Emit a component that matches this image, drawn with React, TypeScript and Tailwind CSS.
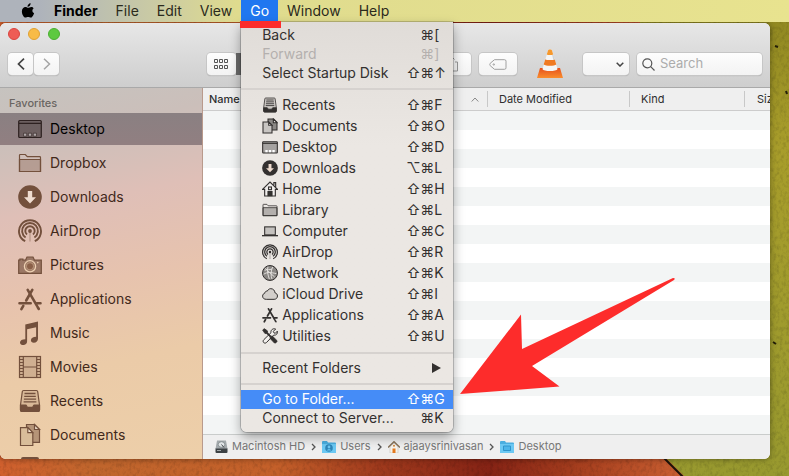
import React from "react";

type IconProps = { className?: string };

function Svg({ className, children }: IconProps & { children: React.ReactNode }) {
  return (
    <svg viewBox="0 0 24 24" className={className} fill="none" stroke="currentColor" strokeWidth="1.2" aria-hidden="true">
      {children}
    </svg>
  );
}

const DesktopIcon = ({ className }: IconProps) => (
  <Svg className={className}>
    <rect x="0.7" y="3.5" width="22.6" height="17" rx="1" fill="currentColor" fillOpacity="0.35" />
    <path d="M1 6.3h22" />
    <path d="M5.5 16.2h3.2v3H5.5zM10.4 16.2h3.2v3h-3.2zM15.3 16.2h3.2v3h-3.2z" fill="#fff" fillOpacity="0.45" strokeWidth="0.6" />
  </Svg>
);
const MenuDesktopIcon = ({ className }: IconProps) => (
  <Svg className={className}>
    <rect x="1" y="4" width="22" height="17" rx="1" fill="#a5a2a0" strokeWidth="1.6" />
    <path d="M1 6.500h22" strokeWidth="1.600" />
    <path d="M5 16.500h3.500V20H5zM10.300 16.500h3.500V20h-3.500zM15.600 16.500h3.500V20h-3.500z" fill="#fff" stroke="none" />
  </Svg>
);
const FolderIcon = ({ className }: IconProps) => (
  <Svg className={className}>
    <path d="M1.5 20.5V4.2c0-.5.3-.7.8-.7h5l2 2.2h12.400c.5 0 .8.300.8.800v14z" />
    <path d="M1.500 8.500h21v12h-21z" fill="currentColor" fillOpacity="0.300" />
  </Svg>
);
const DownloadsIcon = ({ className }: IconProps) => (
  <Svg className={className}>
    <circle cx="12" cy="12" r="11.800" fill="currentColor" stroke="none" />
    <path d="M9.800 6h4.400v6.200H18L12 18.500l-6-6.300h3.800z" fill="#efdccf" stroke="none" />
  </Svg>
);
const AirDropIcon = ({ className }: IconProps) => (
  <Svg className={className}>
    <g strokeWidth="1.900">
      <path d="M7.200 22.200a11 11 0 1 1 9.600 0" />
      <path d="M7.600 18.500a7.900 7.900 0 1 1 8.800 0" />
      <path d="M9 15.600a4.700 4.700 0 1 1 6 0" />
    </g>
    <circle cx="12" cy="12" r="1.900" fill="currentColor" stroke="none" />
    <path d="M12 13v9.500" strokeWidth="1.200" strokeOpacity="0.400" />
  </Svg>
);
const PicturesIcon = ({ className }: IconProps) => (
  <Svg className={className}>
    <path d="M.700 7.200h1.200V6h3v1.200h2.600L9 4h6l1.500 3.200h6.800v13.100H.700z" fill="currentColor" fillOpacity="0.650" />
    <circle cx="12" cy="13.300" r="5.600" fill="#9a7660" stroke="#edd0b2" strokeWidth="1.300" />
    <circle cx="12" cy="13.300" r="3.600" fill="#8a6048" stroke="#c9a78d" strokeWidth="0.700" />
    <circle cx="19.800" cy="9.600" r="0.800" fill="#edd0b2" stroke="none" />
  </Svg>
);
const ApplicationsIcon = ({ className }: IconProps) => (
  <Svg className={className}>
    <g strokeWidth="2.600" strokeLinecap="round">
      <path d="M14.300 2.800 8.200 13.500M5.300 18.800l-1.900 3.300" />
      <path d="m9.700 2.800 9.300 16M19.600 20l1.200 2" />
      <path d="M1.500 16.200h11.200M18.800 16.200h3.700" />
    </g>
  </Svg>
);
const MusicIcon = ({ className }: IconProps) => (
  <Svg className={className}>
    <path d="M7.300 3.600 20 .500v17.300c0 2.400-1.700 3.900-4.200 3.900-1.800 0-2.900-1-2.900-2.500 0-2.300 2.200-3.300 5.200-3.400V6.200L9.100 8.300v11.900c0 2.400-1.700 3.900-4.200 3.900-1.800 0-2.900-1-2.900-2.500 0-2.300 2.200-3.300 5.300-3.400z" fill="currentColor" stroke="none" />
  </Svg>
);
const MoviesIcon = ({ className }: IconProps) => (
  <Svg className={className}>
    <rect x="1.500" y="1.500" width="21" height="21" fill="currentColor" fillOpacity="0.220" />
    <path d="M5.300 1.500v21M18.700 1.500v21M5.300 12h13.400" />
    <path d="M1.500 4.500h3.800M1.500 7.500h3.800M1.500 10.500h3.800M1.500 13.500h3.800M1.500 16.500h3.800M1.500 19.500h3.800M18.700 4.500h3.800M18.700 7.500h3.800M18.700 10.500h3.800M18.700 13.500h3.800M18.700 16.500h3.800M18.700 19.500h3.800" />
  </Svg>
);
const RecentsIcon = ({ className }: IconProps) => (
  <Svg className={className}>
    <path d="M4.300 2.600c.100-.700.500-1.100 1.200-1.100h13c.700 0 1.100.400 1.200 1.100L21.500 16v5c0 1-.500 1.500-1.500 1.500H4c-1 0-1.500-.500-1.500-1.500v-5z" fill="currentColor" fillOpacity="0.150" />
    <path d="M2.500 16h5.300c.800 0 .900 2.300 2 2.300h4.400c1.100 0 1.200-2.300 2-2.300h5.300v5c0 1-.500 1.500-1.500 1.500H4c-1 0-1.500-.500-1.500-1.500z" fill="currentColor" />
    <path d="M6.500 4.500h11M6.200 7.300h11.600M5.900 10.100h12.200M5.600 12.900h12.800" strokeWidth="1.300" />
  </Svg>
);
const DocumentsIcon = ({ className }: IconProps) => (
  <Svg className={className}>
    <path d="M8.500 1.500h8l5 5v12.800H8.500z" fill="currentColor" fillOpacity="0.450" />
    <path d="M16.500 1.500v5h5z" fill="#ead9c6" />
    <path d="M2.500 4.700h7.300l5 5v12.800H2.500z" fill="#d9bd9a" />
    <path d="M9.800 4.700v5h5z" fill="#f3e4d0" />
  </Svg>
);
const MenuDocumentsIcon = ({ className }: IconProps) => (
  <Svg className={className}>
    <g strokeWidth="1.600">
      <path d="M9 1.500h8.500l5 5V18H9z" fill="#8b8885" />
      <path d="M17 1.500v5.500h5.500z" fill="#f2efec" />
      <path d="M1.500 6h8.500l5 5v11.500H1.500z" fill="#c8c5c2" />
      <path d="M10 6v5h5z" fill="#fff" />
    </g>
  </Svg>
);
const HomeIcon = ({ className }: IconProps) => (
  <Svg className={className}>
    <g strokeWidth="1.700">
      <path d="M.800 12.500 12 1.500l11.200 11H20V22.500H4V12.500z" fill="#fff" fillOpacity="0.350" />
      <path d="M17.800 6.500V2.500h2.700V9" />
      <rect x="9.800" y="9" width="4.400" height="4" />
      <path d="M9 22V16h6v6z" fill="currentColor" />
    </g>
  </Svg>
);
const ComputerIcon = ({ className }: IconProps) => (
  <Svg className={className}>
    <rect x="4" y="5.800" width="16" height="12" fill="#c4c1be" strokeWidth="1.600" />
    <path d="M0 19h24" strokeWidth="2" />
  </Svg>
);
const NetworkIcon = ({ className }: IconProps) => (
  <Svg className={className}>
    <circle cx="12" cy="12" r="11.200" fill="#8a8784" strokeWidth="1.500" />
    <path d="M4 8c4-2 7 0 11-2M2.500 14c5-4 11-3 19-1M9 2.500c-2 6 0 13 2 18.500M16 3c-3 6-3 13-1 18M5 5c4 4 9 9 14 13" stroke="#e2dfdc" strokeWidth="1.500" />
  </Svg>
);
const CloudIcon = ({ className }: IconProps) => (
  <Svg className={className}>
    <path d="M6.500 20C3 20 .900 18 .900 15.200c0-2.300 1.400-3.900 3.300-4.400.100-2.100 1.800-3.400 3.700-3.100C9 5.300 11 4 13.200 4c3.600 0 6 2.700 6.200 6.200 2.300.500 3.800 2.400 3.800 4.800 0 2.900-2.100 5-5 5z" fill="#8b8885" fillOpacity="0.250" strokeWidth="1.500" />
  </Svg>
);
const UtilitiesIcon = ({ className }: IconProps) => (
  <Svg className={className}>
    <path d="M20.500 1.500 17 5l.800 2.200L20 8l3-3.300c1 3.500-1.800 6.800-5.500 6L7 21.500c-1.200 1.500-3.400 1.500-4.500.300-1.200-1.200-1-3.100.300-4.300L13.500 7C12.700 3 16.500 0 20.500 1.500z" strokeWidth="1.500" fill="#f3f0ed" />
    <path d="M1 3 3.500 1l4.500 3.200.5 3 5 5 2.500.300 6.500 6.500c1 1.200-2.500 4.500-3.800 3.500L12.500 16l-.3-2.500-5-5-3-.500z" fill="currentColor" />
  </Svg>
);
const AppleLogo = () => (
  <svg viewBox="0 0 14 17" className="h-4 w-[14px]" fill="#000" aria-label="Apple">
    <path d="M9.800.3c.1 1-.3 1.900-.9 2.600-.6.700-1.500 1.200-2.400 1.100-.1-.9.300-1.900.9-2.500C8 .800 9 .3 9.800.3zM12.900 5.800c-1.900 1.100-1.700 4.100.6 5-.5 1.400-1.900 4.700-3.500 4.700-1.200 0-1.500-.7-2.900-.7s-1.800.7-2.900.7C2.500 15.500.5 12 .5 9c0-3 1.900-4.700 3.800-4.700 1.200 0 2.200.8 2.900.8.700 0 1.900-.9 3.400-.9.900 0 1.900.5 2.300 1.600z" />
  </svg>
);

const sidebarItems = [
  { label: "Desktop", Icon: DesktopIcon, active: true },
  { label: "Dropbox", Icon: FolderIcon },
  { label: "Downloads", Icon: DownloadsIcon },
  { label: "AirDrop", Icon: AirDropIcon },
  { label: "Pictures", Icon: PicturesIcon },
  { label: "Applications", Icon: ApplicationsIcon },
  { label: "Music", Icon: MusicIcon },
  { label: "Movies", Icon: MoviesIcon },
  { label: "Recents", Icon: RecentsIcon },
  { label: "Documents", Icon: DocumentsIcon },
];

const places = [
  { label: "Recents", Icon: RecentsIcon, mod: "⇧", letter: "F" },
  { label: "Documents", Icon: MenuDocumentsIcon, mod: "⇧", letter: "O" },
  { label: "Desktop", Icon: MenuDesktopIcon, mod: "⇧", letter: "D" },
  { label: "Downloads", Icon: DownloadsIcon, mod: "⌥", letter: "L" },
  { label: "Home", Icon: HomeIcon, mod: "⇧", letter: "H" },
  { label: "Library", Icon: FolderIcon, mod: "⇧", letter: "L" },
  { label: "Computer", Icon: ComputerIcon, mod: "⇧", letter: "C" },
  { label: "AirDrop", Icon: AirDropIcon, mod: "⇧", letter: "R" },
  { label: "Network", Icon: NetworkIcon, mod: "⇧", letter: "K" },
  { label: "iCloud Drive", Icon: CloudIcon, mod: "⇧", letter: "I" },
  { label: "Applications", Icon: ApplicationsIcon, mod: "⇧", letter: "A" },
  { label: "Utilities", Icon: UtilitiesIcon, mod: "⇧", letter: "U" },
];

function Keys({ mod = "", letter }: { mod?: string; letter: string }) {
  return (
    <span className="ml-auto grid grid-cols-[14px_14px_12px]">
      <span>{mod}</span>
      <span>⌘</span>
      <span>{letter}</span>
    </span>
  );
}

type MenuRowProps = {
  label: string;
  mod?: string;
  letter?: string;
  Icon?: (p: IconProps) => React.ReactElement;
  disabled?: boolean;
  selected?: boolean;
};

function MenuRow({ label, mod, letter, Icon, disabled, selected }: MenuRowProps) {
  const tone = selected ? "bg-[#458cf7] text-white" : disabled ? "text-[#b4b0ae]" : "text-[#33302f]";
  return (
    <li>
      <button
        disabled={disabled}
        className={`flex w-full items-center gap-1 pr-[7px] pb-px pl-[21px] text-left text-sm whitespace-nowrap ${Icon ? "h-[21px]" : "h-[19px]"} ${tone}`}
      >
        {Icon && <Icon className="size-4 shrink-0" />}
        {label}
        {letter ? (
          <Keys mod={mod} letter={letter} />
        ) : (
          <svg viewBox="0 0 9 10" className="mr-[5px] ml-auto h-[10px] w-[9px]" fill="currentColor" aria-hidden="true">
            <path d="M0 0l9 5-9 5z" />
          </svg>
        )}
      </button>
    </li>
  );
}

const Divider = () => (
  <li className="flex h-3 items-center" role="separator">
    <span className="h-[2px] w-full bg-[#d6d2cf]" />
  </li>
);

function GoMenu() {
  return (
    <ul className="absolute top-full left-0 w-[212px] rounded-b-md bg-linear-to-b from-[#e0dcd8] to-[#ebe7e3] to-30% py-1 shadow-[0_0_0_1px_rgba(0,0,0,0.18),0_5px_12px_rgba(0,0,0,0.35)]">
      <MenuRow label="Back" letter="[" />
      <MenuRow label="Forward" letter="]" disabled />
      <MenuRow label="Select Startup Disk" mod="⇧" letter="↑" />
      <Divider />
      {places.map((p) => (
        <MenuRow key={p.label} {...p} />
      ))}
      <Divider />
      <MenuRow label="Recent Folders" />
      <Divider />
      <MenuRow label="Go to Folder..." mod="⇧" letter="G" selected />
      <MenuRow label="Connect to Server..." letter="K" />
    </ul>
  );
}

function MenuBar() {
  return (
    <header className="relative z-20 flex h-[22px] items-stretch bg-linear-to-r from-[#aeb3bb] from-5% via-[#dfdb8e] via-30% to-[#e8e38f] pl-[21px] text-sm text-[#2b2a1c]">
      <button className="mr-[10px] flex items-center">
        <AppleLogo />
      </button>
      <button className="px-[9px] font-bold text-black">Finder</button>
      <button className="px-[9px]">File</button>
      <button className="px-[9px]">Edit</button>
      <button className="px-[9px]">View</button>
      <div className="relative">
        <button className="h-full bg-[#2077f0] px-[9px] text-white">Go</button>
        <GoMenu />
        <span className="absolute top-[21px] -left-px h-[7px] w-[41px] bg-[#fd2c2b]" />
      </div>
      <button className="px-[9px]">Window</button>
      <button className="px-[9px]">Help</button>
    </header>
  );
}

const toolButton =
  "flex h-[22px] items-center justify-center rounded-sm bg-linear-to-b from-[#fdfdfd] to-[#f3f3f3] shadow-[0_0_0_1px_#c6c6c6,0_1px_1px_rgba(0,0,0,0.25)]";

function VlcCone() {
  return (
    <svg viewBox="0 0 26 30" className="h-[30px] w-[26px]" aria-label="VLC">
      <defs>
        <linearGradient id="base" x1="0" y1="0" x2="0" y2="1">
          <stop offset="0" stopColor="#e5501c" />
          <stop offset="1" stopColor="#fa8d2c" />
        </linearGradient>
      </defs>
      <path d="M3 19h20l3 10H0z" fill="url(#base)" />
      <path d="M11 1.500C11 0 15 0 15 1.500L20.500 20c-1 2.800-14 2.800-15 0z" fill="#f5f5f5" />
      <path d="M11 1.500C11 0 15 0 15 1.500L16.200 5.400c-1 .8-5.400.8-6.400 0z" fill="#f6982c" />
      <path d="M8.300 10.200c1.500 1.200 7.900 1.200 9.400 0l1.600 5.300c-1.900 1.800-10.700 1.800-12.600 0z" fill="#f07a22" />
      <path d="M15.200 6c.600 0 .900-.300 1.100-.400l1.400 4.600c-.400.400-.8.500-1.400.700z" fill="#cfd3d6" />
    </svg>
  );
}

function Toolbar() {
  return (
    <div className="h-[65px] border-b border-[#a9a9a9] bg-linear-to-b from-[#e7e7e7] to-[#cecece]">
      <div className="flex gap-2 pt-[5px] pl-2">
        <button aria-label="Close" className="size-3 rounded-full border border-[#d9453f] bg-[#ee5c55]" />
        <button aria-label="Minimize" className="size-3 rounded-full border border-[#e0a033] bg-[#f8bb46]" />
        <button aria-label="Zoom" className="size-3 rounded-full border border-[#4bae31] bg-[#5dc940]" />
      </div>
      <div className="mt-[9px] flex h-[30px] items-center px-2">
        <button aria-label="Back" className={`${toolButton} w-[25px]`}>
          <svg viewBox="0 0 8 12" className="h-3 w-2" fill="none" stroke="#444" strokeWidth="1.7"><path d="M7 .7 1.500 6 7 11.300" /></svg>
        </button>
        <button aria-label="Forward" className={`${toolButton} ml-px w-[25px]`}>
          <svg viewBox="0 0 8 12" className="h-3 w-2" fill="none" stroke="#a5a5a5" strokeWidth="1.500"><path d="M1 .7 6.500 6 1 11.300" /></svg>
        </button>
        <div className="ml-[148px] flex">
          <button aria-label="Icon view" className={`${toolButton} w-[29px]`}>
            <svg viewBox="0 0 15 11" className="h-[11px] w-[15px]" fill="none" stroke="#555">
              <path d="M.5.500h3v3h-3zM5.500.500h3v3h-3zM10.500.500h3v3h-3zM.5 6.500h3v3h-3zM5.500 6.500h3v3h-3zM10.500 6.500h3v3h-3z" />
            </svg>
          </button>
          <button aria-label="List view" className="h-[22px] w-[29px] bg-[#696969]" />
        </div>
        <div className="ml-auto flex items-center">
          <button aria-label="Share" className={`${toolButton} w-[38px]`}>
            <svg viewBox="0 0 14 16" className="h-4 w-[14px]" fill="none" stroke="#999"><path d="M4 6H1.500v9h11V6H10M7 10V1M4.500 3.500 7 1l2.500 2.500" /></svg>
          </button>
          <button aria-label="Tags" className={`${toolButton} ml-2 w-[38px]`}>
            <svg viewBox="0 0 18 11" className="h-[11px] w-[18px]" fill="none" stroke="#a0a0a0"><path d="M5.500.7h10q1.500 0 1.500 1.500v6.600q0 1.500-1.500 1.500h-10L1.200 6.700q-.9-1.200 0-2.400z" /><circle cx="4.800" cy="5.500" r=".7" /></svg>
          </button>
          <button className="ml-5"><VlcCone /></button>
          <button aria-label="Actions" className={`${toolButton} ml-5 w-[46px] pl-7`}>
            <svg viewBox="0 0 8 5" className="h-[5px] w-2" fill="none" stroke="#444" strokeWidth="1.500"><path d="M.7.700 4 4 7.300.7" /></svg>
          </button>
          <label className={`${toolButton} ml-2 w-[125px] gap-[5px] px-[5px]`}>
            <svg viewBox="0 0 13 13" className="size-[13px] shrink-0" fill="none" stroke="#555" strokeWidth="1.200"><circle cx="5.300" cy="5.300" r="4.500" /><path d="m8.700 8.700 3.800 3.800" /></svg>
            <input type="search" aria-label="Search" placeholder="Search" className="w-full min-w-0 bg-transparent text-[13px] outline-none placeholder:text-[#acacac]" />
          </label>
        </div>
      </div>
    </div>
  );
}

function Sidebar() {
  return (
    <nav className="w-[203px] shrink-0 overflow-hidden border-r border-[#b99a8c] bg-[linear-gradient(168deg,#c6c3bf_0%,#cbbfba_14%,#dfbfb7_32%,#e7c3ae_52%,#ebcba8_72%,#edcfa9_100%)] text-[#42291b] [contain:size]">
      <h2 className="flex h-[25px] items-end pb-[2px] pl-[9px] text-[11px] font-medium text-[#6a6562]">Favorites</h2>
      <ul className="flex flex-col gap-[2px]">
        {sidebarItems.map(({ label, Icon, active }) => (
          <li key={label}>
            <a
              href="#"
              className={`flex h-8 items-center gap-2 pl-[18px] text-sm ${active ? "bg-linear-to-b from-[#8a8082] to-[#917f81] text-black" : ""}`}
            >
              <Icon className={`size-6 ${active ? "text-[#2d2120]" : "text-[#73503c]"}`} />
              <span>{label}</span>
            </a>
          </li>
        ))}
        <li className="pt-1 pl-[21px]">
          <div className="h-4 w-[18px] rounded-xs bg-[#73503c]" />
        </li>
      </ul>
    </nav>
  );
}

const columnHead = "border-b border-[#cccccc] bg-[#efefef] p-0 font-normal";
const rows = Array.from({ length: 17 }, (_, i) => i);

function FileList() {
  return (
    <table className="w-full table-fixed border-separate border-spacing-0 text-left text-[11px] text-[#2e2e2e]">
      <colgroup>
        <col />
        <col className="w-[142px]" />
        <col className="w-[115px]" />
        <col className="w-[25px]" />
      </colgroup>
      <thead>
        <tr className="h-[23px]">
          <th className={columnHead}>
            <div className="flex h-4 items-center justify-between border-r border-[#c8c8c8] pr-2 pl-[6px] font-medium">
              Name
              <svg viewBox="0 0 8 5" className="h-[5px] w-2" fill="none" stroke="#888"><path d="M.7 4.500 4 1l3.300 3.500" /></svg>
            </div>
          </th>
          <th className={columnHead}><div className="h-4 border-r border-[#c8c8c8] pl-[11px] leading-4">Date Modified</div></th>
          <th className={columnHead}><div className="h-4 border-r border-[#c8c8c8] pl-[11px] leading-4">Kind</div></th>
          <th className={columnHead}><div className="h-4 overflow-hidden pl-3 leading-4">Size</div></th>
        </tr>
      </thead>
      <tbody>
        {rows.map((r) => (
          <tr key={r} className="h-[19px] odd:bg-[#f3f5f5] even:bg-white">
            <td colSpan={4} className="p-0" />
          </tr>
        ))}
      </tbody>
    </table>
  );
}

const BlueFolder = ({ children }: { children: React.ReactNode }) => (
  <svg viewBox="0 0 14 12" className="h-3 w-[14px]" aria-hidden="true">
    <path d="M0 1q0-1 1-1h4l1 1.500h7q1 0 1 1V11q0 1-1 1H1q-1 0-1-1z" fill="#4aaee0" />
    <path d="M0 3h14v8q0 1-1 1H1q-1 0-1-1z" fill="#6cc8f3" />
    {children}
  </svg>
);

const DiskIcon = () => (
  <svg viewBox="0 0 13 13" className="size-[13px]" aria-hidden="true">
    <path d="M2 .5h9L12.500 9H.5z" fill="#a3a9ac" />
    <path d="M.5 8.500h12V12q0 1-1 1h-10q-1 0-1-1z" fill="#3c4144" />
    <ellipse cx="6.500" cy="4.500" rx="3.300" ry="2.800" fill="#e1e5e7" stroke="#7e8588" strokeWidth=".8" />
    <path d="m6.500 4.500 2.500 3" stroke="#4a4f52" />
    <path d="M2 10.500h4" stroke="#a4aaac" />
  </svg>
);

const HouseIcon = () => (
  <svg viewBox="0 0 12 12" className="size-3" aria-hidden="true">
    <path d="M2 5.500 6 2l4 3.500V12H2z" fill="#f7f3ec" stroke="#b9b4ac" strokeWidth=".5" />
    <path d="M0 6.500 6 .8l6 5.700" fill="none" stroke="#857158" strokeWidth="1.500" />
    <path d="M4.500 7.500h3V12h-3z" fill="#e3791f" />
    <circle cx="6" cy="4.800" r="1" fill="#d08336" />
  </svg>
);

const path = [
  { label: "Macintosh HD", icon: <DiskIcon /> },
  { label: "Users", icon: <BlueFolder><circle cx="7" cy="7" r="3.800" fill="#2d85b8" /><circle cx="7" cy="6" r="1.400" fill="#6cc8f3" /><path d="M4.500 9.500q2.500-3 5 0" fill="#6cc8f3" /></BlueFolder> },
  { label: "ajaaysrinivasan", icon: <HouseIcon /> },
  { label: "Desktop", icon: <BlueFolder><path d="M3.500 5h7v4.500h-7z" fill="#4db5e9" stroke="#2f95cc" /></BlueFolder> },
];

function PathBar() {
  return (
    <div className="flex h-[25px] items-center border-t border-[#c9cccb] bg-[#efefef] pb-px pl-3 text-[11px] text-[#777777]">
      {path.map((p, i) => (
        <React.Fragment key={p.label}>
          {i > 0 && (
            <svg viewBox="0 0 5 8" className="mx-[6px] h-2 w-[5px]" fill="none" stroke="#555" strokeWidth="1.300" aria-hidden="true"><path d="M1 1l3 3-3 3" /></svg>
          )}
          <span className="flex items-center gap-1">{p.icon}{p.label}</span>
        </React.Fragment>
      ))}
    </div>
  );
}

function Wallpaper() {
  return (
    <svg className="absolute inset-0 size-full" viewBox="0 0 789 476" preserveAspectRatio="none" aria-hidden="true">
      <defs>
        <linearGradient id="rust" gradientUnits="userSpaceOnUse" x1="0" x2="789" y1="0" y2="0">
          <stop offset="0" stopColor="#d0602e" />
          <stop offset=".12" stopColor="#c0662d" />
          <stop offset=".35" stopColor="#c4602a" />
          <stop offset=".48" stopColor="#a03a1d" />
          <stop offset=".62" stopColor="#852315" />
          <stop offset=".74" stopColor="#a8401f" />
          <stop offset=".86" stopColor="#c85e31" />
        </linearGradient>
        <linearGradient id="olive" gradientUnits="userSpaceOnUse" x1="0" x2="0" y1="0" y2="476">
          <stop offset="0" stopColor="#8d8520" />
          <stop offset=".3" stopColor="#a89d2b" />
          <stop offset="1" stopColor="#98992f" />
        </linearGradient>
        <filter id="plaster" x="0" y="0" width="100%" height="100%">
          <feTurbulence type="fractalNoise" baseFrequency=".3 .22" numOctaves="3" seed="4" />
          <feColorMatrix values="0 0 0 0 0 0 0 0 0 0 0 0 0 0 0 0.5 0 0 0 -0.22" />
        </filter>
      </defs>
      <path d="M0 0h789v476H0z" fill="url(#rust)" />
      <path d="M640 0h149v476H684L664 456 640 430z" fill="url(#olive)" />
      <path d="M0 0h789v476H0z" filter="url(#plaster)" opacity="0.6" />
      <path d="M662 456l22 22" stroke="#1c130a" strokeWidth="2" />
      <path d="M775 46l3 1M786 91l1 3M773 342l3 2" stroke="#241f08" strokeWidth="2" />
    </svg>
  );
}

export default function App() {
  return (
    <div className="relative min-h-screen overflow-hidden bg-[#8f3a1c] pb-[17px] font-['Inter','DejaVu_Sans',sans-serif]">
      <Wallpaper />
      <MenuBar />
      <main className="relative mt-px mr-[19px] overflow-hidden rounded-md bg-white shadow-[0_0_6px_rgba(0,0,0,0.4)]">
        <Toolbar />
        <div className="flex">
          <Sidebar />
          <section className="min-w-0 flex-1">
            <FileList />
            <PathBar />
          </section>
        </div>
      </main>
      <svg viewBox="0 0 216 118" className="absolute top-[277px] left-[460px] z-30 h-[118px] w-[216px]" aria-hidden="true">
        <path d="M0 117 61 37.500 62 72 213 1q3 0 1 2L72 89l27.500 20.500z" fill="#fd2c2b" />
      </svg>
    </div>
  );
}
